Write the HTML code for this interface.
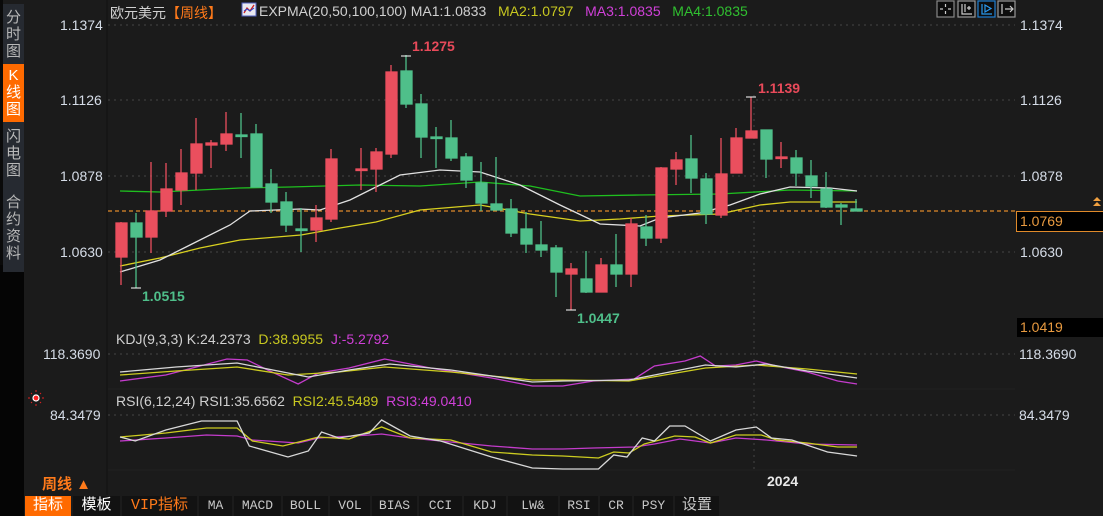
<!DOCTYPE html>
<html><head><meta charset="utf-8">
<style>
html,body{margin:0;padding:0;background:#1b1b1b;width:1103px;height:516px;overflow:hidden;font-family:"Liberation Sans","Noto Sans CJK SC",sans-serif}
.side{position:absolute;left:3px;width:21px;background:#262a31;color:#b8b8b8;font-size:15px;line-height:17px;text-align:center}
.tab{position:absolute;top:496px;height:20px;line-height:20px;background:#121212;color:#c8c8c8;font-family:"Liberation Mono","Noto Sans CJK SC",monospace;font-size:13px;text-align:center}
.lbl{position:absolute;font-size:14px;color:#d6dde8}
</style></head><body>
<div style="position:absolute;left:0;top:0;width:3px;height:516px;background:#0a0a0a"></div>
<div style="position:absolute;left:0;top:265px;width:24px;height:251px;background:#050505"></div>
<div class="side" style="top:4px;height:58px;padding-top:5px">分<br>时<br>图</div>
<div class="side" style="top:64px;height:55px;background:#ff6a00;color:#fff;padding-top:3px">K<br>线<br>图</div>
<div class="side" style="top:122px;height:60px;padding-top:6px">闪<br>电<br>图</div>
<div class="side" style="top:186px;height:78px;padding-top:8px">合<br>约<br>资<br>料</div>

<svg width="1103" height="516" style="position:absolute;left:0;top:0">
<line x1="107" y1="0" x2="107" y2="495" stroke="#111" stroke-width="1"/>
<g stroke="#444" stroke-dasharray="2,4" stroke-width="1">
<line x1="108" y1="25" x2="1015" y2="25"/>
<line x1="108" y1="100" x2="1015" y2="100"/>
<line x1="108" y1="176" x2="1015" y2="176"/>
<line x1="108" y1="252" x2="1015" y2="252"/>
<line x1="108" y1="354" x2="1015" y2="354"/>
<line x1="108" y1="415" x2="1015" y2="415"/>
<line x1="754" y1="95" x2="754" y2="470"/>
</g>
<line x1="108" y1="389" x2="1015" y2="389" stroke="#222"/>
<line x1="108" y1="470" x2="1015" y2="470" stroke="#222"/>
<line x1="108" y1="211" x2="1015" y2="211" stroke="#e08a2a" stroke-dasharray="4,3" stroke-width="1.3"/>
<polyline fill="none" stroke="#1fbf1f" stroke-width="1.3" points="120,191 160,192 200,190 240,188 290,187 360,185 420,186 480,182 530,186 580,196 640,195 720,194 790,190 857,191"/>
<polyline fill="none" stroke="#d8d020" stroke-width="1.3" points="120,266 160,258 200,248 240,240 301,235 340,228 376,222 420,210 480,205 530,214 580,221 620,219 660,216 720,214 760,205 790,202 857,202"/>
<polyline fill="none" stroke="#e0e0e0" stroke-width="1.3" points="120,272 160,260 190,245 230,225 250,211 300,209 320,210 350,200 380,185 400,175 440,170 480,172 520,185 560,205 600,224 640,226 660,218 700,213 730,205 760,194 790,187 830,188 857,191"/>
<g stroke-width="1.3">
<g stroke="#ea4f5e" fill="#ea4f5e">
<line x1="121" y1="222" x2="121" y2="285"/><rect x="116" y="223" width="11" height="34"/>
<line x1="151" y1="162" x2="151" y2="253"/><rect x="146" y="211" width="11" height="26"/>
<line x1="166" y1="163" x2="166" y2="217"/><rect x="161" y="189" width="11" height="22"/>
<line x1="181" y1="149" x2="181" y2="205"/><rect x="176" y="173" width="11" height="17"/>
<line x1="196" y1="118" x2="196" y2="190"/><rect x="191" y="144" width="11" height="29"/>
<line x1="211" y1="140" x2="211" y2="168"/><rect x="206" y="143" width="11" height="2"/>
<line x1="226" y1="112" x2="226" y2="151"/><rect x="221" y="134" width="11" height="10"/>
<line x1="316" y1="205" x2="316" y2="242"/><rect x="311" y="218" width="11" height="12"/>
<line x1="331" y1="149" x2="331" y2="222"/><rect x="326" y="159" width="11" height="60"/>
<line x1="361" y1="148" x2="361" y2="190"/><rect x="356" y="169" width="11" height="1.5"/>
<line x1="376" y1="148" x2="376" y2="192"/><rect x="371" y="152" width="11" height="17"/>
<line x1="391" y1="65" x2="391" y2="158"/><rect x="386" y="72" width="11" height="82"/>
<line x1="571" y1="263" x2="571" y2="310"/><rect x="566" y="269" width="11" height="5"/>
<line x1="601" y1="258" x2="601" y2="292"/><rect x="596" y="265" width="11" height="27"/>
<line x1="631" y1="218" x2="631" y2="287"/><rect x="626" y="224" width="11" height="50"/>
<line x1="661" y1="167" x2="661" y2="243"/><rect x="656" y="168" width="11" height="70"/>
<line x1="676" y1="152" x2="676" y2="185"/><rect x="671" y="160" width="11" height="9"/>
<line x1="721" y1="138" x2="721" y2="218"/><rect x="716" y="174" width="11" height="41"/>
<line x1="736" y1="128" x2="736" y2="173"/><rect x="731" y="138" width="11" height="35"/>
<line x1="751" y1="97" x2="751" y2="138"/><rect x="746" y="131" width="11" height="7"/>
<line x1="781" y1="142" x2="781" y2="168"/><rect x="776" y="157" width="11" height="1.5"/>
</g>
<g stroke="#4fbf8a" fill="#4fbf8a">
<line x1="136" y1="213" x2="136" y2="288"/><rect x="131" y="223" width="11" height="14"/>
<line x1="241" y1="113" x2="241" y2="158"/><rect x="236" y="135" width="11" height="1.5"/>
<line x1="256" y1="124" x2="256" y2="187"/><rect x="251" y="134" width="11" height="53"/>
<line x1="271" y1="169" x2="271" y2="213"/><rect x="266" y="184" width="11" height="18"/>
<line x1="286" y1="192" x2="286" y2="232"/><rect x="281" y="202" width="11" height="23"/>
<line x1="301" y1="208" x2="301" y2="252"/><rect x="296" y="229" width="11" height="1.5"/>
<line x1="406" y1="55" x2="406" y2="108"/><rect x="401" y="71" width="11" height="33"/>
<line x1="421" y1="94" x2="421" y2="158"/><rect x="416" y="104" width="11" height="33"/>
<line x1="436" y1="127" x2="436" y2="168"/><rect x="431" y="137" width="11" height="1.5"/>
<line x1="451" y1="120" x2="451" y2="161"/><rect x="446" y="138" width="11" height="20"/>
<line x1="466" y1="153" x2="466" y2="188"/><rect x="461" y="157" width="11" height="23"/>
<line x1="481" y1="162" x2="481" y2="211"/><rect x="476" y="183" width="11" height="20"/>
<line x1="496" y1="157" x2="496" y2="210"/><rect x="491" y="204" width="11" height="6"/>
<line x1="511" y1="199" x2="511" y2="237"/><rect x="506" y="209" width="11" height="24"/>
<line x1="526" y1="212" x2="526" y2="253"/><rect x="521" y="229" width="11" height="15"/>
<line x1="541" y1="221" x2="541" y2="257"/><rect x="536" y="245" width="11" height="5"/>
<line x1="556" y1="245" x2="556" y2="297"/><rect x="551" y="248" width="11" height="24"/>
<line x1="586" y1="251" x2="586" y2="293"/><rect x="581" y="279" width="11" height="13"/>
<line x1="616" y1="234" x2="616" y2="287"/><rect x="611" y="265" width="11" height="9"/>
<line x1="646" y1="215" x2="646" y2="246"/><rect x="641" y="227" width="11" height="11"/>
<line x1="691" y1="135" x2="691" y2="193"/><rect x="686" y="159" width="11" height="19"/>
<line x1="706" y1="173" x2="706" y2="224"/><rect x="701" y="179" width="11" height="35"/>
<line x1="766" y1="130" x2="766" y2="178"/><rect x="761" y="130" width="11" height="29"/>
<line x1="796" y1="150" x2="796" y2="186"/><rect x="791" y="158" width="11" height="15"/>
<line x1="811" y1="160" x2="811" y2="198"/><rect x="806" y="176" width="11" height="10"/>
<line x1="826" y1="172" x2="826" y2="208"/><rect x="821" y="189" width="11" height="18"/>
<line x1="841" y1="203" x2="841" y2="225"/><rect x="836" y="205" width="11" height="2"/>
<line x1="856" y1="199" x2="856" y2="211"/><rect x="851" y="209" width="11" height="2"/>
</g>
</g>
<g stroke="#fff" stroke-width="1"><line x1="401" y1="56" x2="411" y2="56"/><line x1="131" y1="288" x2="141" y2="288"/><line x1="566" y1="310" x2="576" y2="310"/><line x1="746" y1="97" x2="756" y2="97"/></g>
<g transform="translate(2.93,0) scale(1.018,1)">
<polyline fill="none" stroke="#c43ccc" stroke-width="1.3" points="115,381 160,375 220,359 240,360 260,370 290,384 310,373 340,368 375,359 420,368 480,378 520,386 550,386 580,381 620,379 640,366 670,361 685,356 700,366 720,365 740,361 760,366 790,372 820,381 839,384"/>
<polyline fill="none" stroke="#cccc20" stroke-width="1.3" points="115,375 170,371 230,367 280,375 330,372 375,367 440,372 520,380 550,380 615,381 650,375 690,368 740,365 790,369 839,374"/>
<polyline fill="none" stroke="#d8d8d8" stroke-width="1.3" points="115,372 170,367 230,363 300,377 340,370 380,364 440,370 520,382 550,381 615,380 640,375 670,369 690,365 720,367 750,364 790,371 839,378"/>
<polyline fill="none" stroke="#c43ccc" stroke-width="1.3" points="115,441 160,438 200,435 230,436 245,440 290,443 310,438 360,435 372,434 400,438 480,446 520,449 550,449 580,448 620,447 640,444 665,439 695,443 720,438 750,440 790,444 839,445"/>
<polyline fill="none" stroke="#cccc20" stroke-width="1.3" points="115,437 160,433 200,428 230,428 245,441 275,446 310,437 340,439 372,427 400,438 440,440 480,452 520,455 550,456 585,458 600,452 615,453 630,444 660,436 680,437 695,443 720,435 745,435 760,440 790,443 820,447 839,447"/>
<polyline fill="none" stroke="#d8d8d8" stroke-width="1.3" points="115,437 130,441 160,430 195,421 230,421 242,446 280,457 300,451 313,432 330,438 360,433 372,420 400,436 430,441 480,457 520,468 550,469 585,469 600,455 613,457 628,438 640,441 655,426 670,426 695,441 720,430 740,427 755,438 775,440 810,452 839,456"/>
</g>
<g fill="none" stroke-width="1.2">
<rect x="937" y="1" width="17" height="16" fill="#0d0d0d" stroke="#888"/>
<rect x="958" y="1" width="17" height="16" fill="#0d0d0d" stroke="#999"/>
<rect x="978" y="1" width="17" height="16" fill="#0d0d0d" stroke="#1f7fd0"/>
<rect x="998" y="1" width="17" height="16" fill="#0d0d0d" stroke="#999"/>
<path d="M945.5 4v3M945.5 11v3M940 9h3M948 9h3" stroke="#ccc"/>
<path d="M962 4v10h10M965 4v8M969 6v4M967 8h4" stroke="#ccc"/>
<path d="M982 4v10h10M985 5l6 3.5-6 3.5z" stroke="#2a9af0"/>
<path d="M1002 4v10M1005 9h8M1010 6l3 3-3 3" stroke="#ccc"/>
</g>
<rect x="242" y="3" width="14" height="13" fill="#e8e8f0" stroke="#5060c0"/>
<path d="M244 13l3-5 3 3 4-6" stroke="#d02020" fill="none" stroke-width="1.3"/>
<path d="M244 11l3-2 3 2 4-3" stroke="#2040d0" fill="none" stroke-width="1"/>
<path d="M1093 201l4-4 4 4zM1093 206l4-4 4 4z" fill="#f0a040"/>
<circle cx="36" cy="398" r="3" fill="#ff2020" stroke="#fff" stroke-width="1.2"/>
<g stroke="#e02020" stroke-width="1"><line x1="36" y1="390" x2="36" y2="392"/><line x1="36" y1="404" x2="36" y2="406"/><line x1="28" y1="398" x2="30" y2="398"/><line x1="42" y1="398" x2="44" y2="398"/><line x1="31" y1="393" x2="32" y2="394"/><line x1="40" y1="402" x2="41" y2="403"/><line x1="40" y1="394" x2="41" y2="393"/><line x1="31" y1="403" x2="32" y2="402"/></g>
</svg>

<div class="lbl" style="left:110px;top:3px;color:#d0d0d0">欧元美元<span style="color:#ff7a1a">【周线】</span></div>
<div class="lbl" style="left:259px;top:3px;white-space:nowrap"><span style="color:#d0d0d0">EXPMA(20,50,100,100) MA1:1.0833</span>&nbsp;&nbsp;&nbsp;<span style="color:#c8c820">MA2:1.0797</span>&nbsp;&nbsp;&nbsp;<span style="color:#d040d8">MA3:1.0835</span>&nbsp;&nbsp;&nbsp;<span style="color:#30c030">MA4:1.0835</span></div>
<div class="lbl" style="left:60px;top:17px">1.1374</div>
<div class="lbl" style="left:60px;top:92px">1.1126</div>
<div class="lbl" style="left:60px;top:168px">1.0878</div>
<div class="lbl" style="left:60px;top:244px">1.0630</div>
<div class="lbl" style="left:1020px;top:17px">1.1374</div>
<div class="lbl" style="left:1020px;top:92px">1.1126</div>
<div class="lbl" style="left:1020px;top:168px">1.0878</div>
<div class="lbl" style="left:1020px;top:244px">1.0630</div>
<div style="position:absolute;left:1016px;top:211px;width:83px;height:19px;border:1px solid #e08a2a;background:#000;color:#e89a40;font-size:14px;line-height:19px;padding-left:3px;box-sizing:content-box">1.0769</div>
<div style="position:absolute;left:1017px;top:318px;width:83px;height:19px;background:#000;color:#e89a40;font-size:14px;line-height:19px;padding-left:3px">1.0419</div>
<div class="lbl" style="left:412px;top:38px;color:#e84a5a;font-weight:bold">1.1275</div>
<div class="lbl" style="left:758px;top:80px;color:#e84a5a;font-weight:bold">1.1139</div>
<div class="lbl" style="left:142px;top:288px;color:#4fbf8a;font-weight:bold">1.0515</div>
<div class="lbl" style="left:577px;top:310px;color:#4fbf8a;font-weight:bold">1.0447</div>
<div class="lbl" style="left:116px;top:331px;white-space:nowrap"><span style="color:#d0d0d0">KDJ(9,3,3) K:24.2373</span>&nbsp;&nbsp;<span style="color:#c8c820">D:38.9955</span>&nbsp;&nbsp;<span style="color:#d040d8">J:-5.2792</span></div>
<div class="lbl" style="left:43px;top:346px">118.3690</div>
<div class="lbl" style="left:1019px;top:346px">118.3690</div>
<div class="lbl" style="left:116px;top:393px;white-space:nowrap"><span style="color:#d0d0d0">RSI(6,12,24) RSI1:35.6562</span>&nbsp;&nbsp;<span style="color:#c8c820">RSI2:45.5489</span>&nbsp;&nbsp;<span style="color:#d040d8">RSI3:49.0410</span></div>
<div class="lbl" style="left:50px;top:407px">84.3479</div>
<div class="lbl" style="left:1019px;top:407px">84.3479</div>
<div class="lbl" style="left:767px;top:473px;color:#e8e8e8;font-weight:bold">2024</div>
<div class="lbl" style="left:42px;top:473px;color:#ff7a1a;font-size:15px;font-weight:bold">周线 ▲</div>

<div class="tab" style="left:25px;width:46px;background:#ff6a00;color:#fff;font-size:15px">指标</div>
<div class="tab" style="left:73px;width:47px;color:#fff;font-size:15px">模板</div>
<div class="tab" style="left:122px;width:75px;color:#ff7a1a;font-size:15px">VIP指标</div>
<div class="tab" style="left:199px;width:33px">MA</div>
<div class="tab" style="left:234px;width:47px">MACD</div>
<div class="tab" style="left:283px;width:45px">BOLL</div>
<div class="tab" style="left:330px;width:40px">VOL</div>
<div class="tab" style="left:372px;width:45px">BIAS</div>
<div class="tab" style="left:419px;width:43px">CCI</div>
<div class="tab" style="left:464px;width:42px">KDJ</div>
<div class="tab" style="left:508px;width:50px">LW&amp;</div>
<div class="tab" style="left:560px;width:38px">RSI</div>
<div class="tab" style="left:600px;width:32px">CR</div>
<div class="tab" style="left:634px;width:39px">PSY</div>
<div class="tab" style="left:675px;width:44px;font-size:15px">设置</div>
</body></html>
